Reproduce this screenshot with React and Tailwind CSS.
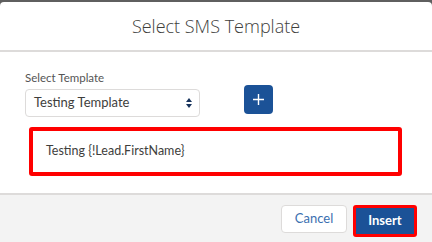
import React from 'react';

const font = { fontFamily: 'Lato, "Open Sans", "Liberation Sans", sans-serif' };

export default function App() {
  return (
    <div className="w-[432px] h-[242px] bg-[#5f5f5f] pt-[2px] overflow-hidden" style={font}>
      <div className="h-[240px] bg-white rounded-t-[4px] flex flex-col">
        {/* header */}
        <div className="h-[50px] border-b-2 border-[#dddbda] flex items-center justify-center">
          <h2 className="text-[18px] font-light text-[#3e3e3c] font-['Open_Sans',sans-serif]">Select SMS Template</h2>
        </div>

        {/* body */}
        <div className="flex-1 px-[25px] pt-[19px]">
          <div className="flex">
            <div className="flex flex-col">
              <label className="text-[11.5px] leading-[14px] text-[#555] mb-[4px]">Select Template</label>
              <div className="w-[175px] h-[28px] border border-[#dddbda] rounded-[4px] flex items-center justify-between pl-[8px] pr-[7px]">
                <span className="text-[13px] text-[#3e3e3c]">Testing Template</span>
                <svg width="6" height="12" viewBox="0 0 6 12">
                  <path d="M3 1 L6 5 L0 5 Z" fill="#16325c" />
                  <path d="M0 7 L6 7 L3 11 Z" fill="#16325c" />
                </svg>
              </div>
            </div>
            <button className="ml-[44px] mt-[14px] w-[29px] h-[29px] rounded-[4px] bg-[#1b5297] flex items-center justify-center">
              <svg width="13" height="13" viewBox="0 0 13 13">
                <path d="M6.5 1 V12 M1 6.5 H12" stroke="#fff" strokeWidth="1.4" />
              </svg>
            </button>
          </div>

          <div className="ml-[4px] mt-[10px] w-[373px] h-[49px] border-4 border-[#ff0000] rounded-[3px] flex items-center pl-[13px]">
            <span className="text-[12.5px] text-[#3e3e3c]">Testing {'{!Lead.FirstName}'}</span>
          </div>
        </div>

        {/* footer */}
        <div className="h-[49px] border-t-2 border-[#dddbda] bg-[#f3f3f3] flex items-start justify-end pt-[10px] pr-[15px]">
          <button className="w-[66px] h-[28px] bg-white border border-[#dddbda] rounded-[4px] text-[13px] text-[#3a6fb0]">
            Cancel
          </button>
          <button className="ml-[6px] w-[64px] h-[32px] bg-[#1b5297] border-[3px] border-[#ff0000] rounded-[3px] text-[13px] font-bold text-white">
            Insert
          </button>
        </div>
      </div>
    </div>
  );
}
